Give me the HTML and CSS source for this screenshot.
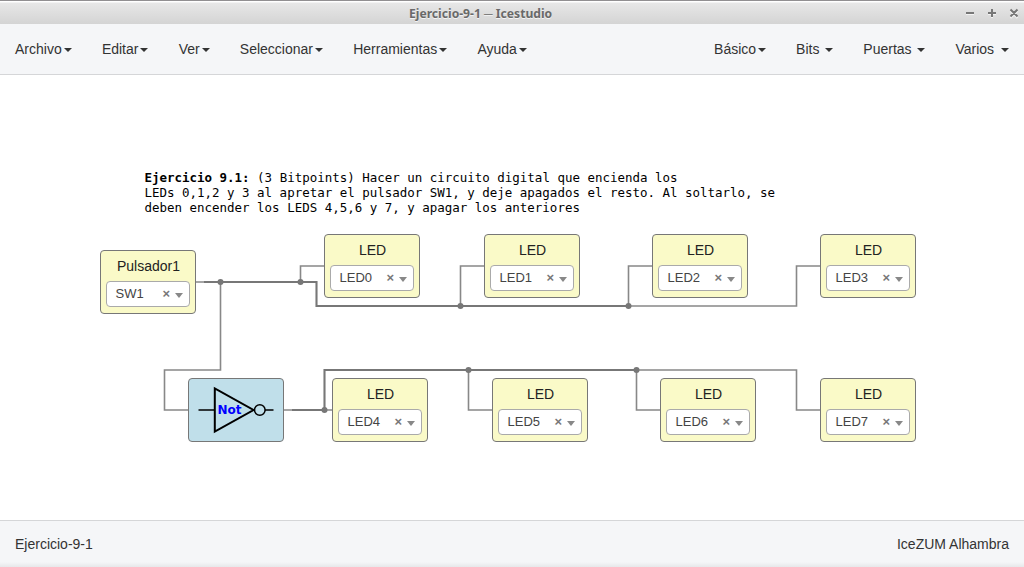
FILE: index.html
```html
<!DOCTYPE html>
<html lang="es">
<head>
<meta charset="utf-8">
<title>Ejercicio-9-1 ─ Icestudio</title>
<link rel="stylesheet" href="styles.css">
</head>
<body>
<header class="titlebar">
  <span class="title">Ejercicio-9-1 ─ Icestudio</span>
  <svg class="controls" width="56" height="12" viewBox="0 0 56 12">
    <g class="control-shadow" transform="translate(0 1)"><path d="M3 5H11M25 5H33M29 1V9M47.500 2L54.500 9M54.500 2L47.500 9"/></g>
    <g class="control-mark"><path d="M3 5H11M25 5H33M29 1V9M47.500 1.500L54.500 8.500M54.500 1.500L47.500 8.500"/></g>
  </svg>
</header>
<nav class="navbar">
  <ul class="menu">
    <li>Archivo<i class="caret"></i></li>
    <li>Editar<i class="caret"></i></li>
    <li>Ver<i class="caret"></i></li>
    <li>Seleccionar<i class="caret"></i></li>
    <li>Herramientas<i class="caret"></i></li>
    <li>Ayuda<i class="caret"></i></li>
  </ul>
  <ul class="menu blocks-menu">
    <li>Básico<i class="caret"></i></li>
    <li>Bits <i class="caret"></i></li>
    <li>Puertas <i class="caret"></i></li>
    <li>Varios <i class="caret"></i></li>
  </ul>
</nav>
<main class="canvas">
  <svg class="wires" width="1024" height="445" viewBox="0 75 1024 445">
    <g class="thin">
      <path d="M196 282H220.500V370H164.500V410H188"/>
      <path d="M300.500 282V266H324"/>
      <path d="M460.500 306V266H484"/>
      <path d="M628.500 306V266H652"/>
      <path d="M628 306H796.500V266H820"/>
      <path d="M284 410H332"/>
      <path d="M468.500 370V410H492"/>
      <path d="M636.500 370V410H660"/>
      <path d="M636 370H796.500V410H820"/>
    </g>
    <g class="thick">
      <path d="M204 282H316.500V306H628"/>
      <path d="M292 410H324.500V370H636"/>
    </g>
    <g class="joints">
      <circle cx="220.500" cy="282" r="3"/><circle cx="300.500" cy="282" r="3"/>
      <circle cx="460.500" cy="306" r="3"/><circle cx="628.500" cy="306" r="3"/>
      <circle cx="324.500" cy="410" r="3"/><circle cx="468.500" cy="370" r="3"/>
      <circle cx="636.500" cy="370" r="3"/>
    </g>
  </svg>
  <div class="note">
    <div class="line"><b>Ejercicio 9.1:</b><span> (3 Bitpoints) Hacer un circuito digital que encienda los</span></div>
    <div class="line">LEDs 0,1,2 y 3 al apretar el pulsador SW1, y deje apagados el resto. Al soltarlo, se</div>
    <div class="line">deben encender los LEDS 4,5,6 y 7, y apagar los anteriores</div>
  </div>
  <div class="block sw1"><span class="label">Pulsador1</span><div class="select"><span class="value">SW1</span><b class="clear">×</b><i class="arrow"></i></div></div>
  <div class="block led0"><span class="label">LED</span><div class="select"><span class="value">LED0</span><b class="clear">×</b><i class="arrow"></i></div></div>
  <div class="block led1"><span class="label">LED</span><div class="select"><span class="value">LED1</span><b class="clear">×</b><i class="arrow"></i></div></div>
  <div class="block led2"><span class="label">LED</span><div class="select"><span class="value">LED2</span><b class="clear">×</b><i class="arrow"></i></div></div>
  <div class="block led3"><span class="label">LED</span><div class="select"><span class="value">LED3</span><b class="clear">×</b><i class="arrow"></i></div></div>
  <div class="block led4"><span class="label">LED</span><div class="select"><span class="value">LED4</span><b class="clear">×</b><i class="arrow"></i></div></div>
  <div class="block led5"><span class="label">LED</span><div class="select"><span class="value">LED5</span><b class="clear">×</b><i class="arrow"></i></div></div>
  <div class="block led6"><span class="label">LED</span><div class="select"><span class="value">LED6</span><b class="clear">×</b><i class="arrow"></i></div></div>
  <div class="block led7"><span class="label">LED</span><div class="select"><span class="value">LED7</span><b class="clear">×</b><i class="arrow"></i></div></div>
  <div class="block gate">
    <svg width="94" height="62" viewBox="189 379 94 62">
      <path class="pin" d="M198.500 410H215M265 410H273.500"/>
      <path class="triangle" d="M214.800 388.500V431.500L253.500 410Z"/>
      <circle class="bubble" cx="259.800" cy="410" r="5.300"/>
      <text class="gate-name" x="217.500" y="414">Not</text>
    </svg>
  </div>
</main>
<footer class="footer"><span>Ejercicio-9-1</span><span>IceZUM Alhambra</span></footer>
</body>
</html>
```
FILE: styles.css
```css
* { box-sizing: border-box; }
body {
  margin: 0;
  height: 567px;
  display: flex;
  flex-direction: column;
  overflow: hidden;
  background: #fff;
  color: #333;
  font: 14px/20px "Liberation Sans", Arial, sans-serif;
}
.titlebar {
  height: 24px;
  flex: none;
  display: grid;
  grid-template-columns: 409px auto 1fr;
  align-items: center;
  border-top: 1px solid #918f91;
  background: linear-gradient(#fff 0, #fff 1px, #e7e7e7 2px, #d4d4d4 100%);
}
.title {
  grid-column: 2;
  padding-top: 2px;
  color: #696969;
  font: bold 12.150px/20px "Noto Sans", sans-serif;
  text-shadow: 0 1px #f4f4f4;
}
.controls { grid-column: 3; justify-self: end; margin: 2px 5px 0 0; fill: none; }
.control-shadow { stroke: #f4f4f4; stroke-width: 2; }
.control-mark { stroke: #777; stroke-width: 2; }
.navbar {
  height: 51px;
  flex: none;
  display: flex;
  justify-content: space-between;
  background: #f5f6f8;
  border-bottom: 1px solid #d5d6d8;
}
.menu { display: flex; margin: 0; padding: 0; list-style: none; }
.menu li { padding: 15px 15.200px 15px 15px; white-space: pre; }
.blocks-menu li { padding-right: 15px; }
.caret {
  display: inline-block;
  margin-left: 2px;
  vertical-align: middle;
  border-top: 4px solid #333;
  border-left: 4px solid transparent;
  border-right: 4px solid transparent;
}
.blocks-menu li:last-child .caret { margin-left: 3px; }
.canvas { position: relative; flex: 1; }
.wires { position: absolute; left: 0; top: 0; fill: none; stroke: #777; }
.thin { stroke-width: 1.6; stroke: #888; }
.thick { stroke-width: 2.1; stroke: #777; }
.joints { fill: #777; stroke: none; }
.note {
  position: absolute;
  left: 144.500px;
  top: 95px;
  color: #000;
  font: 12.470px/15px "DejaVu Sans Mono", monospace;
}
.line { display: flex; height: 15px; white-space: pre; }
.block {
  position: absolute;
  width: 96px;
  height: 64px;
  padding: 5px;
  border: 1px solid #777;
  border-radius: 4px;
  background: #fafac8;
}
.label {
  display: block;
  height: 25px;
  padding-left: 1px;
  color: #222;
  text-align: center;
}
.select {
  display: flex;
  align-items: center;
  height: 26px;
  padding: 0 6px 0 8.500px;
  border: 1px solid #aaa;
  border-radius: 4px;
  background: #fff;
  color: #444;
  font-size: 13px;
}
.value { flex: 1; }
.clear { color: #777; font-size: 13px; margin-right: 5px; }
.arrow {
  margin-top: 3px;
  border-top: 5px solid #888;
  border-left: 4px solid transparent;
  border-right: 4px solid transparent;
}
.sw1 { left: 100px; top: 175px; }
.led0 { left: 324px; top: 159px; }
.led1 { left: 484px; top: 159px; }
.led2 { left: 652px; top: 159px; }
.led3 { left: 820px; top: 159px; }
.led4 { left: 332px; top: 303px; }
.led5 { left: 492px; top: 303px; }
.led6 { left: 660px; top: 303px; }
.led7 { left: 820px; top: 303px; }
.gate { left: 188px; top: 303px; padding: 0; background: #c0dfea; }
.gate svg { display: block; fill: none; stroke: #000; }
.pin { stroke-width: 1.3; }
.triangle { stroke-width: 2; }
.bubble { stroke-width: 1.5; }
.gate-name { fill: #00f; stroke: none; font: bold 12px "DejaVu Sans", sans-serif; }
.footer {
  height: 47px;
  flex: none;
  display: flex;
  justify-content: space-between;
  padding: 13px 15px 0;
  border-top: 1px solid #d5d6d8;
  background: linear-gradient(#f5f6f8 0, #f5f6f8 41px, #e7e8ea 46px);
}
```
